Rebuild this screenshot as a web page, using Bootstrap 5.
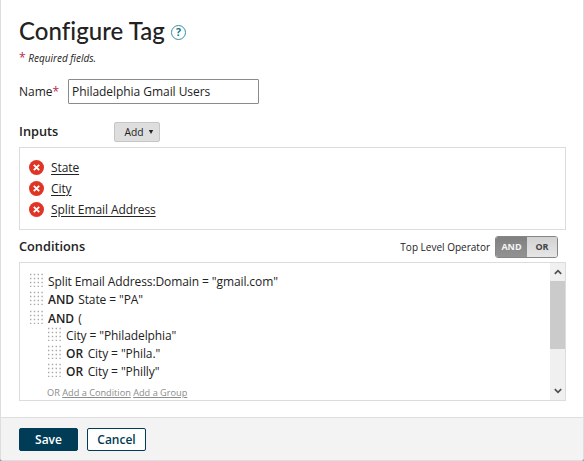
<!DOCTYPE html>
<html lang="en">
<head>
<meta charset="utf-8">
<meta name="viewport" content="width=device-width, initial-scale=1">
<title>Configure Tag</title>
<link href="https://cdn.jsdelivr.net/npm/bootstrap@5.3.0/dist/css/bootstrap.min.css" rel="stylesheet">
<style>
html,body{height:100%;overflow:hidden}
body{font-family:"Open Sans",sans-serif;font-size:12px;line-height:18px;color:#222;background:#7b93a0}
.panel{height:461px;background:#fff;border:1px solid #dedede;border-top:0;border-radius:0 0 3px 3px}
.panel-main{height:417px;padding:17px 17px 0 18px}
.title{font-family:Lato,sans-serif;font-size:24px;font-weight:500;line-height:28px;padding-bottom:2px;letter-spacing:.04px;color:#222}
.help{margin-left:6px}
.req{color:#b5274d}
.note{font-size:10px;height:16px;line-height:16px;margin-top:3px}
.note .req{font-size:12px}
.name-row{height:25px;margin-top:13px}
.name-row label{width:49px}
.name-row input{width:191px;height:25px;padding:0 3px;border:1px solid #8b8b8b;border-radius:1px;font-size:12px;letter-spacing:-.05px;color:#222}
.sub{font-size:12.75px;font-weight:600;line-height:16px;margin:0;padding-bottom:2px}
.inputs-head{height:20px;margin-top:18px}
.inputs-head .sub{width:95px}
.add-btn{width:46px;height:20px;background:#dedede;border:1px solid #c6c6c6;border-radius:2px;font-size:10.3px;line-height:14px;color:#222}
.frame{border:1px solid #dcdcdc}
.inputs-box{height:83px;margin-top:5px;padding:9px 9px 0}
.inputs-box .item{height:21px;gap:7px}
.inputs-box a{color:#222;line-height:18px;letter-spacing:-.09px;text-underline-offset:1.5px}
.cond-head{height:22px;margin-top:6px;padding-right:8px}
.op-label{font-size:10px;margin-right:5px}
.op{width:63px;height:22px;border:1px solid #858585;border-radius:3px;overflow:hidden;font-size:9px;font-weight:700;line-height:20px;text-align:center}
.op .on{width:31px;background:linear-gradient(#808080,#929292);color:#f4f4f4}
.op .off{background:linear-gradient(#d2d2d2,#e6e6e6);color:#444}
.cond-box{height:139px;margin-top:4px}
.rules{padding:10px 0 0 10px}
.rule{height:18px;gap:4px;line-height:18px;white-space:pre;letter-spacing:-.1px}
.rule b{font-weight:600;margin-right:1px;letter-spacing:0}
.rule.opening{height:17px;margin-top:1px}
.nested{margin-left:18px}
.nested .rule b{margin-right:1.5px}
.adders{font-size:9.2px;line-height:14px;color:#8c8c8c;margin:5px 0 0 -1px}
.adders a{color:#8c8c8c;text-underline-offset:1px}
.scroller{width:15px;background:#f0f0f0}
.arrow{height:18px}
.thumb{height:68px;background:#cbcbcb}
.foot{height:43px;background:#f3f3f3;border-top:1px solid #dedede;padding:10px 18px 0;gap:9px;border-radius:0 0 3px 3px}
.foot .btn{height:23px;padding:0;font-size:12px;font-weight:600;line-height:20px;border:1px solid #003c55;border-radius:2px}
.save{width:59px;background:#003c55;color:#fff}
.cancel{width:59px;background:#fff;color:#003c55}
</style>
</head>
<body>
<svg class="d-none">
  <symbol id="grip" viewBox="0 0 14 14"><path d="M0 1.5h13M0 5.5h13M0 9.5h13M0 13.3h13" fill="none" stroke="#aaa" stroke-width="1.3" stroke-dasharray="1.4 2.4"/></symbol>
  <symbol id="remove" viewBox="0 0 15 15"><circle cx="7.5" cy="7.5" r="7.5" fill="#e03524"/><path d="M4.8 4.8l5.4 5.4M10.2 4.8l-5.4 5.4" stroke="#fff" stroke-width="1.9"/></symbol>
</svg>
<div class="panel">
  <main class="panel-main">
    <div class="d-flex align-items-center">
      <h1 class="title mb-0">Configure Tag</h1>
      <svg class="help" width="15" height="15" viewBox="0 0 15 15"><circle cx="7.5" cy="7.5" r="7" fill="#fff" stroke="#23828f" stroke-width=".9"/><text x="7.5" y="11.2" text-anchor="middle" font-family="Open Sans" font-size="10.5" font-weight="700" fill="#117581">?</text></svg>
    </div>
    <div class="note fst-italic"><span class="req fst-normal">*</span> Required fields.</div>
    <div class="name-row d-flex align-items-center">
      <label for="name">Name<span class="req">*</span></label>
      <input id="name" type="text" value="Philadelphia Gmail Users">
    </div>
    <div class="inputs-head d-flex align-items-center">
      <h2 class="sub">Inputs</h2>
      <button class="add-btn d-flex align-items-center justify-content-center gap-1 py-0 ps-1 pe-0" type="button">Add <svg width="6" height="6" viewBox="0 0 6 6"><path d="M.8 1h4.4L3 5z" fill="#222"/></svg></button>
    </div>
    <div class="frame inputs-box">
      <div class="item d-flex align-items-center"><svg width="15" height="15"><use href="#remove"/></svg><a href="#">State</a></div>
      <div class="item d-flex align-items-center"><svg width="15" height="15"><use href="#remove"/></svg><a href="#">City</a></div>
      <div class="item d-flex align-items-center"><svg width="15" height="15"><use href="#remove"/></svg><a href="#">Split Email Address</a></div>
    </div>
    <div class="cond-head d-flex align-items-center">
      <h2 class="sub me-auto">Conditions</h2>
      <span class="op-label">Top Level Operator</span>
      <div class="op d-flex"><span class="on">AND</span><span class="off flex-fill">OR</span></div>
    </div>
    <div class="frame cond-box d-flex">
      <div class="rules flex-fill">
        <div class="rule d-flex"><svg width="14" height="14"><use href="#grip"/></svg><span>Split Email Address:Domain = "gmail.com"</span></div>
        <div class="rule d-flex"><svg width="14" height="14"><use href="#grip"/></svg><span><b>AND</b> State = "PA"</span></div>
        <div class="rule opening d-flex"><svg width="14" height="14"><use href="#grip"/></svg><span><b>AND</b> (</span></div>
        <div class="nested">
          <div class="rule d-flex"><svg width="14" height="14"><use href="#grip"/></svg><span>City = "Philadelphia"</span></div>
          <div class="rule d-flex"><svg width="14" height="14"><use href="#grip"/></svg><span><b>OR</b> City = "Phila."</span></div>
          <div class="rule d-flex"><svg width="14" height="14"><use href="#grip"/></svg><span><b>OR</b> City = "Philly"</span></div>
          <div class="adders">OR <a href="#">Add a Condition</a> <a href="#">Add a Group</a></div>
        </div>
      </div>
      <div class="scroller d-flex flex-column">
        <div class="arrow d-flex align-items-center justify-content-center"><svg width="8" height="6" viewBox="0 0 8 6"><path d="M.8 4.8L4 1.6l3.2 3.2" fill="none" stroke="#505050" stroke-width="1.7"/></svg></div>
        <div class="thumb"></div>
        <div class="arrow mt-auto d-flex align-items-center justify-content-center"><svg width="8" height="6" viewBox="0 0 8 6"><path d="M.8 1.2L4 4.4l3.2-3.2" fill="none" stroke="#505050" stroke-width="1.7"/></svg></div>
      </div>
    </div>
  </main>
  <footer class="foot d-flex">
    <button class="btn save" type="button">Save</button>
    <button class="btn cancel" type="button">Cancel</button>
  </footer>
</div>
<script src="https://cdn.jsdelivr.net/npm/bootstrap@5.3.0/dist/js/bootstrap.bundle.min.js"></script>
</body>
</html>
